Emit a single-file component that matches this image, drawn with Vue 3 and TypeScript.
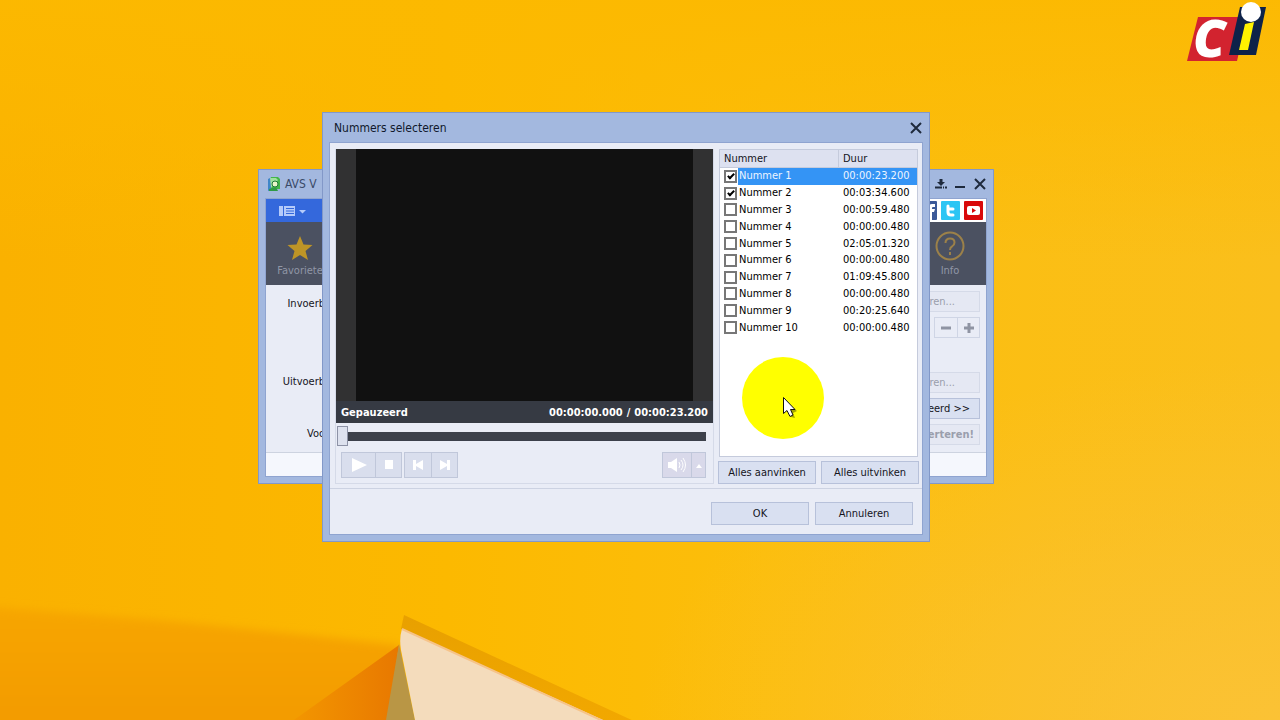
<script setup lang="ts">
import { ref } from 'vue'

interface Track {
  id: number
  name: string
  duration: string
  checked: boolean
}

const durations: string[] = [
  '00:00:23.200', '00:03:34.600', '00:00:59.480', '00:00:00.480', '02:05:01.320',
  '00:00:00.480', '01:09:45.800', '00:00:00.480', '00:20:25.640', '00:00:00.480',
]

const tracks = ref<Track[]>(
  durations.map((duration, i) => ({
    id: i + 1,
    name: `Nummer ${i + 1}`,
    duration,
    checked: i < 2,
  })),
)
const selected = ref(1)
const position = ref(0)

function setAll(value: boolean): void {
  tracks.value.forEach((t) => (t.checked = value))
}
</script>

<template>
  <div class="desktop">
    <svg class="wallpaper" viewBox="0 0 1280 720" preserveAspectRatio="none" aria-hidden="true">
      <defs>
        <linearGradient id="sky" x1="0" y1="0" x2="1" y2="0">
          <stop offset="0" stop-color="#fab100" />
          <stop offset=".35" stop-color="#fcb900" />
          <stop offset=".6" stop-color="#fcbe0c" />
          <stop offset="1" stop-color="#fabf1c" />
        </linearGradient>
        <linearGradient id="top" x1="0" y1="0" x2="0" y2="1">
          <stop offset="0" stop-color="#fcb900" stop-opacity=".9" />
          <stop offset="1" stop-color="#fcb900" stop-opacity="0" />
        </linearGradient>
        <radialGradient id="glow" cx="1" cy="1" r=".5">
          <stop offset="0" stop-color="#fbc235" />
          <stop offset="1" stop-color="#fbc235" stop-opacity="0" />
        </radialGradient>
        <linearGradient id="shade" x1="0" y1="0" x2="0" y2="1">
          <stop offset="0" stop-color="#f7a600" />
          <stop offset=".8" stop-color="#f39c00" />
        </linearGradient>
        <linearGradient id="deep" x1="0" y1="0" x2="1" y2="0">
          <stop offset="0" stop-color="#f39600" />
          <stop offset="1" stop-color="#e87800" />
        </linearGradient>
        <linearGradient id="edge" x1="0" y1="0" x2="0" y2="1">
          <stop offset="0" stop-color="#e8a000" />
          <stop offset="1" stop-color="#f2a800" />
        </linearGradient>
        <filter id="soft" x="-10%" y="-20%" width="120%" height="140%">
          <feGaussianBlur stdDeviation="4" />
        </filter>
      </defs>
      <rect width="1280" height="720" fill="url(#sky)" />
      <rect width="1280" height="720" fill="url(#glow)" />
      <rect width="1280" height="260" fill="url(#top)" />
      <path d="M-20 606 L180 622 L400 645 L394 740 H-20Z" fill="url(#shade)" filter="url(#soft)" />
      <path d="M399 645 L294 720 H388Z" fill="url(#deep)" />
      <path d="M404 615 L401 629 L600 722 H636Z" fill="url(#edge)" />
      <path d="M399 644 L386 720 H415Z" fill="#b99645" />
      <path d="M402 629 Q399 638 401 650 L415 720 H603Z" fill="#f4dcbc" />
      <path d="M402 629 L603 721" stroke="#f6c389" stroke-width="2" />
    </svg>

    <svg class="logo" viewBox="0 0 84 66" role="img" aria-label="Ci">
      <path d="M13 17 H62 L52 61 H2Z" fill="#d2232f" />
      <path d="M55 7 H81 L71 55 H44Z" fill="#0e2249" />
      <path d="M60 24 L69 22 L63 50 H54Z" fill="#fff200" />
      <circle cx="66" cy="12" r="10" fill="#fff" />
      <text x="8" y="57" class="logo-letter">C</text>
    </svg>

    <section class="window main-window" aria-label="AVS">
      <header class="titlebar">
        <svg width="14" height="16" viewBox="0 0 14 16" aria-hidden="true">
          <path d="M1 3 L5 1 V14 L1 15Z" fill="#3f86c8" />
          <path d="M4 1 H11 L13 3 V13 H4Z" fill="#43b649" />
          <path d="M3 2 H9 L11 4 L4 12Z" fill="#9fe0a0" />
          <circle cx="8" cy="8" r="3" fill="#e9f6c9" stroke="#1f7a3a" />
          <path d="M2 13 L9 11 L11 15 H2Z" fill="#2f9a45" />
        </svg>
        <span class="caption">AVS V</span>
        <div class="window-controls">
          <button type="button" aria-label="Naar systeemvak">
            <svg width="12" height="12" viewBox="0 0 12 12"><path d="M6 1 V6" stroke="#1e2a3d" stroke-width="3" /><path d="M2 4 H10 L6 8Z" fill="#1e2a3d" /><path d="M0 9.500 H7 M8 9.500 H9 M10 9.500 H12" stroke="#1e2a3d" stroke-width="2" /></svg>
          </button>
          <button type="button" aria-label="Minimaliseren">
            <svg width="12" height="12" viewBox="0 0 12 12"><path d="M1 9 H11" stroke="#1e2a3d" stroke-width="2" /></svg>
          </button>
          <button type="button" aria-label="Sluiten">
            <svg width="14" height="14" viewBox="0 0 14 14"><path d="M2 2 L12 12 M12 2 L2 12" stroke="#1e2a3d" stroke-width="2" /></svg>
          </button>
        </div>
      </header>
      <div class="client main-client">
        <div class="menu-row">
          <button type="button" class="menu-button" aria-label="Menu">
            <svg width="28" height="12" viewBox="0 0 28 12"><path d="M0 1 H4 V11 H0Z M5 1 H16 V11 H5Z" fill="#b5cbfa" /><path d="M7 3.500 H15 M7 6 H15 M7 8.500 H15" stroke="#3468dc" /><path d="M20 5 H27 L23.500 8.500Z" fill="#b5cbfa" /></svg>
          </button>
          <nav class="social">
            <a href="#" aria-label="Facebook">
              <svg width="19" height="19" viewBox="0 0 19 19"><rect width="19" height="19" rx="1" fill="#3b5998" /><path d="M11 19 V11 H8 V8 H11 V6 Q11 3 14 3 H17 V6 H15 Q14 6 14 7 V8 H17 L16 11 H14 V19Z" fill="#fff" /></svg>
            </a>
            <a href="#" aria-label="Twitter">
              <svg width="19" height="19" viewBox="0 0 19 19"><rect width="19" height="19" rx="1" fill="#2cc5f4" /><path d="M7 5 V11 Q7 14 10 14 H12 M7 8 H12" fill="none" stroke="#fff" stroke-width="3" stroke-linecap="round" /></svg>
            </a>
            <a href="#" aria-label="YouTube">
              <svg width="19" height="19" viewBox="0 0 19 19"><rect width="19" height="19" rx="1" fill="#d9090b" /><rect x="3" y="5" width="13" height="9" rx="2" fill="#fff" /><path d="M8 7 L12 9.500 L8 12Z" fill="#d9090b" /></svg>
            </a>
          </nav>
        </div>
        <div class="toolbar">
          <button type="button" class="tool">
            <svg width="26" height="26" viewBox="0 0 26 26"><path d="M13 1 L16.500 9.500 L25.500 10 L18.500 16 L21 25 L13 20 L5 25 L7.500 16 L0.500 10 L9.500 9.500Z" fill="#be9526" /></svg>
            <span>Favoriete</span>
          </button>
          <button type="button" class="tool info">
            <svg width="30" height="30" viewBox="0 0 30 30"><circle cx="15" cy="15" r="13.500" fill="none" stroke="#9c8149" stroke-width="2" /><path d="M10.500 12 Q10.500 7.500 15 7.500 Q19.500 7.500 19.500 11.500 Q19.500 14 17 15.500 Q15 16.500 15 19" fill="none" stroke="#9c8149" stroke-width="2" /><rect x="14" y="21" width="2" height="3" fill="#9c8149" /></svg>
            <span>Info</span>
          </button>
        </div>
        <div class="form">
          <div class="labels">
            <span class="l-in">Invoerb</span>
            <span class="l-out">Uitvoerb</span>
            <span class="l-for">Voo</span>
          </div>
          <div class="actions">
            <button type="button" class="btn side dim">ren...</button>
            <div class="pair">
              <button type="button" aria-label="Verwijderen"><svg width="12" height="12" viewBox="0 0 12 12"><path d="M1 6 H11" stroke="#8f94a3" stroke-width="3" /></svg></button>
              <button type="button" aria-label="Toevoegen"><svg width="12" height="12" viewBox="0 0 12 12"><path d="M1 6 H11 M6 1 V11" stroke="#8f94a3" stroke-width="3" /></svg></button>
            </div>
            <button type="button" class="btn side dim out">ren...</button>
            <button type="button" class="btn side adv">eerd &gt;&gt;</button>
            <button type="button" class="btn side dim strong">erteren!</button>
          </div>
        </div>
        <footer class="statusbar"></footer>
      </div>
    </section>

    <section class="window dialog" role="dialog" aria-labelledby="dialog-title">
      <header class="titlebar">
        <h1 id="dialog-title" class="caption">Nummers selecteren</h1>
        <div class="window-controls">
          <button type="button" aria-label="Dialoog sluiten">
            <svg width="14" height="14" viewBox="0 0 14 14"><path d="M2 2 L12 12 M12 2 L2 12" stroke="#1e2a3d" stroke-width="2" /></svg>
          </button>
        </div>
      </header>
      <div class="client">
        <div class="panes">
          <div class="player">
            <div class="screen"><div class="frame"></div></div>
            <div class="playback-status">
              <span>Gepauzeerd</span>
              <span class="time"><span>00:00:00.000</span><span>/</span><span>00:00:23.200</span></span>
            </div>
            <input v-model="position" class="seek" type="range" min="0" max="100" aria-label="Positie" />
            <div class="transport">
              <div class="group">
                <button type="button" class="wide" aria-label="Afspelen"><svg width="16" height="16" viewBox="0 0 16 16"><path d="M1 1 L16 8 L1 15Z" fill="#fff" /></svg></button>
                <button type="button" aria-label="Stoppen"><svg width="10" height="10" viewBox="0 0 10 10"><path d="M1 0 H9 V9 H1Z" fill="#fff" /></svg></button>
              </div>
              <div class="group">
                <button type="button" aria-label="Vorige"><svg width="12" height="12" viewBox="0 0 12 12"><path d="M1 1 H4 V5 L11 1 V11 L4 7 V11 H1Z" fill="#fff" /></svg></button>
                <button type="button" aria-label="Volgende"><svg width="12" height="12" viewBox="0 0 12 12"><path d="M11 1 H8 V5 L1 1 V11 L8 7 V11 H11Z" fill="#fff" /></svg></button>
              </div>
              <div class="group volume">
                <button type="button" class="speaker" aria-label="Volume"><svg width="20" height="16" viewBox="0 0 20 16"><path d="M1 5 H4 L10 1 V15 L4 11 H1Z" fill="#fff" /><path d="M12 5 Q14 8 12 11 M14 3 Q18 8 14 13 M16 1 Q21 8 16 15" fill="none" stroke="#fff" /></svg></button>
                <button type="button" class="narrow" aria-label="Volumeregelaar"><svg width="8" height="5" viewBox="0 0 8 5"><path d="M1 5 L4 1 L7 5Z" fill="#fff" /></svg></button>
              </div>
            </div>
          </div>
          <div class="list-pane">
            <div class="list">
              <table>
                <thead>
                  <tr><th class="name-col" scope="col">Nummer</th><th scope="col">Duur</th></tr>
                </thead>
                <tbody>
                  <tr v-for="track in tracks" :key="track.id" :class="{ active: track.id === selected }" @click="selected = track.id">
                    <td class="first">
                      <div class="entry">
                        <input :id="`track-${track.id}`" v-model="track.checked" type="checkbox" />
                        <label :for="`track-${track.id}`">{{ track.name }}</label>
                      </div>
                    </td>
                    <td class="duration">{{ track.duration }}</td>
                  </tr>
                </tbody>
              </table>
            </div>
            <div class="list-actions">
              <button type="button" class="btn" @click="setAll(true)">Alles aanvinken</button>
              <button type="button" class="btn" @click="setAll(false)">Alles uitvinken</button>
            </div>
          </div>
        </div>
        <footer class="dialog-actions">
          <button type="button" class="btn">OK</button>
          <button type="button" class="btn">Annuleren</button>
        </footer>
      </div>
    </section>

    <svg class="pointer" width="84" height="84" viewBox="0 0 84 84" aria-hidden="true">
      <circle cx="42" cy="42" r="41" fill="#ffff00" />
      <path d="M45 45 L56 55 L52 57 L54 62 L50 61Z" fill="#6b6b00" opacity=".6" />
      <path d="M42.500 41.500 V57.500 L46 54.500 L49 60.500 L52 59 L49.500 53.500 H54Z" fill="#fff" stroke="#111" />
    </svg>
  </div>
</template>

<style>
body {
  margin: 0;
  overflow: hidden;
}
</style>

<style scoped>
.desktop {
  position: relative;
  height: 100vh;
  overflow: hidden;
  background: #fcb900;
  font-family: "DejaVu Sans Condensed", "DejaVu Sans", "Noto Sans", sans-serif;
  font-size: 11px;
  line-height: 14px;
  color: #14141c;
}
.desktop * {
  box-sizing: border-box;
}
.wallpaper {
  position: absolute;
  inset: 0;
  width: 100%;
  height: 100%;
}
.logo {
  position: absolute;
  top: 0;
  right: 11px;
  width: 84px;
  height: 66px;
  overflow: visible;
}
.logo-letter {
  font: italic 800 52px "Open Sans", "Noto Sans", sans-serif;
  fill: #fff;
}
button {
  display: flex;
  align-items: center;
  justify-content: center;
  margin: 0;
  padding: 0;
  border: 0;
  background: none;
  color: inherit;
  font: inherit;
}
svg {
  display: block;
}
.window {
  position: absolute;
  display: flex;
  flex-direction: column;
  padding: 0 6px 6px;
  border: 1px solid #8298c8;
  background: #a3b8df;
}
.main-window {
  left: 258px;
  top: 169px;
  width: 57.5%;
}
.dialog {
  left: 322px;
  top: 112px;
  width: 47.5%;
}
.titlebar {
  display: flex;
  align-items: center;
  height: 29px;
  padding: 0 0 0 3px;
}
.main-window .titlebar {
  height: 28px;
  padding-left: 2px;
}
.caption {
  margin: 0;
  font-size: 12px;
  font-weight: 400;
  color: #10182c;
}
.main-window .caption {
  margin-left: 4px;
  color: #3a4a68;
}
.dialog .caption {
  padding-left: 2px;
}
.window-controls {
  display: flex;
  gap: 7px;
  margin-left: auto;
}
.client {
  border: 1px solid #8fa4d0;
  background: #e9ecf6;
}
.main-client {
  display: flex;
  flex-direction: column;
}
.menu-row {
  display: flex;
  justify-content: space-between;
  height: 23px;
  background: #fff;
}
.menu-button {
  width: 84px;
  padding-right: 30px;
  background: #3468dc;
}
.social {
  display: flex;
  align-items: center;
  gap: 4px;
  padding-right: 3px;
}
.toolbar {
  display: flex;
  justify-content: space-between;
  height: 63px;
  background: #4b5161;
  color: #9096a6;
}
.tool {
  width: 68px;
  flex-direction: column;
  justify-content: flex-end;
  gap: 3px;
  padding-bottom: 7px;
}
.info {
  width: 72px;
}
.form {
  display: flex;
  justify-content: space-between;
  height: 168px;
  border-bottom: 1px solid #cdd3e0;
}
.labels {
  display: flex;
  flex-direction: column;
  align-items: flex-end;
  width: 59px;
  padding-top: 12px;
}
.l-out {
  margin-top: 64px;
}
.l-for {
  margin-top: 38px;
}
.actions {
  display: flex;
  flex-direction: column;
  align-items: flex-end;
  gap: 5px;
  padding: 6px 6px 0 0;
}
.btn {
  height: 23px;
  border: 1px solid #b7c1da;
  background: #d9e0f1;
}
.side {
  width: 140px;
  height: 21px;
  justify-content: flex-end;
  padding-right: 9px;
}
.dim {
  border-color: #d5dae8;
  background: #e5e8f3;
  color: #9a9eac;
}
.side.dim {
  padding-right: 24px;
}
.side.strong {
  padding-right: 5px;
  font-weight: 700;
}
.out {
  margin-top: 29px;
}
.pair {
  display: flex;
  height: 21px;
  border: 1px solid #cfd5e5;
}
.pair button {
  width: 22px;
}
.pair button + button {
  border-left: 1px solid #cfd5e5;
}
.statusbar {
  height: 23px;
  background: #f5f7fd;
}
.panes {
  display: flex;
  gap: 4px;
  padding: 6px 3px 4px 5px;
  border-bottom: 1px solid #ccd2e2;
}
.player {
  flex: 1;
  min-width: 0;
  padding-bottom: 5px;
  border: 1px solid #d5dae8;
  border-top: 0;
}
.screen {
  height: 252px;
  padding: 0 20px;
  background: #313132;
}
.frame {
  height: 100%;
  background: #111;
}
.playback-status {
  display: flex;
  align-items: center;
  justify-content: space-between;
  height: 22px;
  padding: 1px 5px 0;
  background: #363a43;
  color: #fff;
  font-weight: 700;
}
.time {
  display: flex;
  gap: 4px;
}
.seek {
  display: block;
  width: calc(100% - 8px);
  height: 20px;
  margin: 3px 7px 0 1px;
  appearance: none;
  background: linear-gradient(#3c404b, #3c404b) center / 100% 9px no-repeat;
}
.seek::-webkit-slider-thumb {
  width: 11px;
  height: 20px;
  appearance: none;
  border: 1px solid #8d92a6;
  background: #dde1ee;
}
.transport {
  display: flex;
  gap: 2px;
  height: 26px;
  margin: 6px 7px 0 5px;
}
.group {
  display: flex;
  border: 1px solid #c0c7da;
  background: #d9deed;
}
.group button {
  width: 26px;
}
.group button + button {
  border-left: 1px solid #c0c7da;
}
.group .wide {
  width: 33px;
}
.group .speaker {
  width: 28px;
}
.group .narrow {
  width: 14px;
}
.volume {
  margin-left: auto;
  background: #d9d9ea;
}
.list-pane {
  display: flex;
  flex-direction: column;
  gap: 4px;
  width: 201px;
}
.list {
  flex: 1;
  margin: 0 1px;
  border: 1px solid #c5cbdc;
  background: #fff;
}
table {
  width: 100%;
  height: 186px;
  border-collapse: separate;
  border-spacing: 0;
  table-layout: fixed;
}
th {
  height: 18px;
  padding: 0 4px;
  border-bottom: 1px solid #c5cbdc;
  background: #dde1f0;
  font-weight: 400;
  text-align: left;
}
.name-col {
  width: 119px;
  border-right: 1px solid #c5cbdc;
}
td {
  padding: 0 0 0 4px;
  color: #000;
}
.entry {
  display: flex;
  align-items: center;
}
.entry label {
  flex: 1;
  padding-left: 2px;
}
.entry input {
  display: grid;
  place-items: center;
  width: 13px;
  height: 13px;
  margin: 0;
  appearance: none;
  border: 2px solid #777;
  background: #fff;
}
.entry input:checked::before {
  content: "";
  width: 4px;
  height: 7px;
  margin-bottom: 2px;
  box-sizing: border-box;
  border: solid #000;
  border-width: 0 2px 2px 0;
  transform: rotate(45deg);
}
.active td {
  background: #3494f5;
  color: #eef5ff;
}
.active .first {
  background: linear-gradient(#fff, #fff) 0 0 / 18px 100% no-repeat #3494f5;
}
.list-actions {
  display: flex;
  gap: 5px;
}
.list-actions .btn {
  flex: 1;
}
.dialog-actions {
  display: flex;
  justify-content: flex-end;
  gap: 6px;
  padding: 13px 9px 9px;
}
.dialog-actions .btn {
  width: 98px;
}
.pointer {
  position: absolute;
  left: 741px;
  top: 356px;
}
</style>
